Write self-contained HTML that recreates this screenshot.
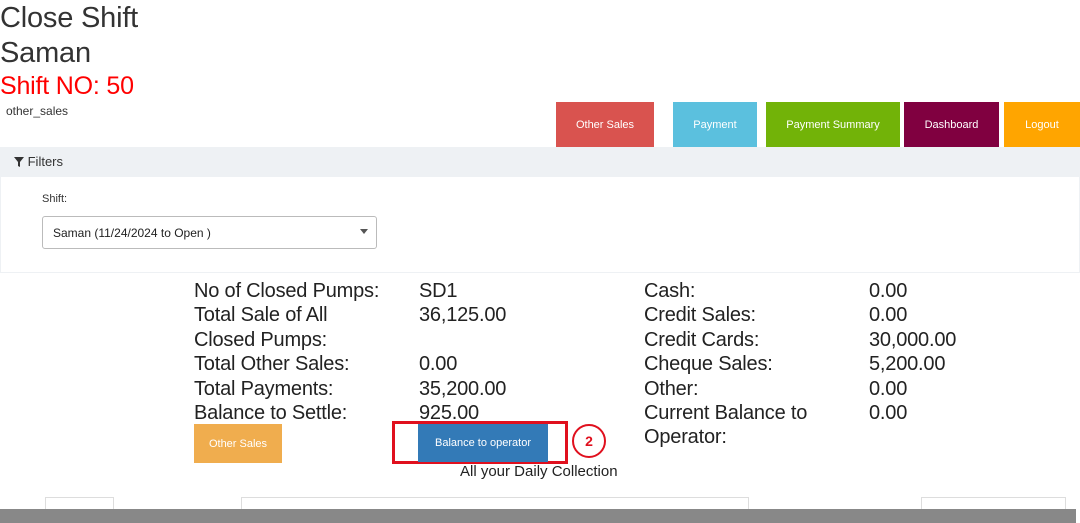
<!DOCTYPE html>
<html><head><style>
*{margin:0;padding:0;box-sizing:border-box}
body{width:1080px;height:523px;overflow:hidden;background:#fff;font-family:"Liberation Sans",sans-serif;color:#333;position:relative}
.a{position:absolute;white-space:nowrap}
.h{font-size:29px;color:#333;letter-spacing:-0.2px}
.btn{position:absolute;top:102px;height:45px;color:#fff;font-size:11px;display:flex;align-items:center;justify-content:center}
.d{font-size:20px;color:#222;letter-spacing:-0.2px}
</style></head><body>
<div class="a h" style="left:0;top:2px">Close Shift</div>
<div class="a h" style="left:0;top:37px">Saman</div>
<div class="a h" style="left:0;top:72px;color:#f00;font-size:25px">Shift NO: 50</div>
<div class="a" style="left:6px;top:104px;font-size:12px">other_sales</div>
<div class="btn" style="left:556px;width:98px;background:#d9534f">Other Sales</div>
<div class="btn" style="left:673px;width:84px;background:#5bc0de">Payment</div>
<div class="btn" style="left:766px;width:134px;background:#72b308">Payment Summary</div>
<div class="btn" style="left:904px;width:95px;background:#800040">Dashboard</div>
<div class="btn" style="left:1004px;width:76px;background:#ffa500">Logout</div>
<div class="a" style="left:0;top:147px;width:1080px;height:30px;background:#eef1f4;font-size:13px;padding:7px 0 0 14px">
<svg width="10" height="10" viewBox="0 0 10 10" style="vertical-align:-1px"><path d="M0 0H10L6 5V10L4 9V5Z" fill="#333"/></svg> Filters</div>
<div class="a" style="left:0;top:177px;width:1080px;height:96px;border:1px solid #eef1f4;border-top:none"></div>
<div class="a" style="left:42px;top:193px;font-size:11px">Shift:</div>
<div class="a" style="left:42px;top:216px;width:335px;height:33px;border:1px solid #bbb;border-radius:3px;font-size:12px;padding:9px 0 0 10px;color:#222">Saman (11/24/2024 to Open )<span style="position:absolute;right:8px;top:12px;width:0;height:0;border:4px solid transparent;border-top:5px solid #555"></span></div>
<div class="a d" style="left:194px;top:279px;line-height:24.4px">No of Closed Pumps:<br>Total Sale of All<br>Closed Pumps:<br>Total Other Sales:<br>Total Payments:<br>Balance to Settle:</div>
<div class="a d" style="left:419px;top:279px;line-height:24.4px">SD1<br>36,125.00<br><br>0.00<br>35,200.00<br>925.00</div>
<div class="a d" style="left:644px;top:279px;line-height:24.4px">Cash:<br>Credit Sales:<br>Credit Cards:<br>Cheque Sales:<br>Other:<br>Current Balance to<br>Operator:</div>
<div class="a d" style="left:869px;top:279px;line-height:24.4px">0.00<br>0.00<br>30,000.00<br>5,200.00<br>0.00<br>0.00</div>
<div class="a" style="left:194px;top:424px;width:88px;height:39px;background:#f0ad4e;color:#fff;font-size:11px;display:flex;align-items:center;justify-content:center">Other Sales</div>
<div class="a" style="left:392px;top:421px;width:176px;height:43px;border:3px solid #e0101e"></div>
<div class="a" style="left:418px;top:424px;width:130px;height:38px;background:#337ab7;color:#fff;font-size:11px;display:flex;align-items:center;justify-content:center">Balance to operator</div>
<div class="a" style="left:572px;top:424px;width:34px;height:34px;border:2px solid #e0101e;border-radius:50%;color:#e0101e;font-size:14px;font-weight:bold;display:flex;align-items:center;justify-content:center">2</div>
<div class="a" style="left:460px;top:463px;font-size:15px;color:#222">All your Daily Collection</div>
<div class="a" style="left:45px;top:497px;width:69px;height:14px;border:1px solid #ddd;border-bottom:none"></div>
<div class="a" style="left:241px;top:497px;width:508px;height:14px;border:1px solid #ddd;border-bottom:none"></div>
<div class="a" style="left:921px;top:497px;width:145px;height:14px;border:1px solid #ddd;border-bottom:none"></div>
<div class="a" style="left:0;top:509px;width:1076px;height:14px;background:#888"></div>
</body></html>
